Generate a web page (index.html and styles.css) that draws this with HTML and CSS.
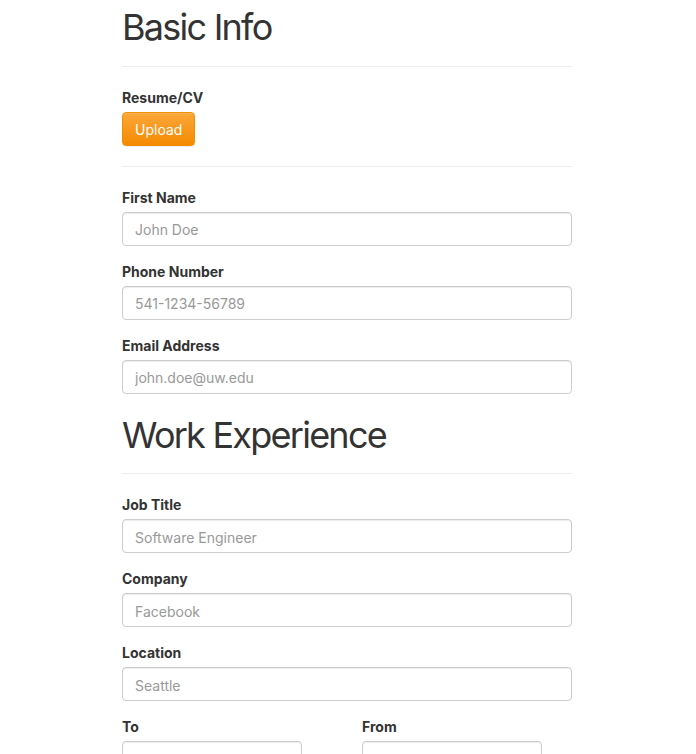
FILE: index.html
```html
<!DOCTYPE html>
<html>
<head>
<meta charset="utf-8">
<link rel="stylesheet" href="styles.css">
</head>
<body>
<div class="container">
  <h1 class="title first">Basic Info</h1>
  <hr>
  <div class="group">
    <label class="label">Resume/CV</label>
    <button class="btn-upload" type="button">Upload</button>
  </div>
  <hr class="after-btn">
  <div class="group">
    <label class="label">First Name</label>
    <input class="input" type="text" placeholder="John Doe">
  </div>
  <div class="group">
    <label class="label">Phone Number</label>
    <input class="input" type="text" placeholder="541-1234-56789">
  </div>
  <div class="group">
    <label class="label">Email Address</label>
    <input class="input" type="text" placeholder="john.doe@uw.edu">
  </div>
  <h1 class="title">Work Experience</h1>
  <hr>
  <div class="group">
    <label class="label">Job Title</label>
    <input class="input" type="text" placeholder="Software Engineer">
  </div>
  <div class="group">
    <label class="label">Company</label>
    <input class="input" type="text" placeholder="Facebook">
  </div>
  <div class="group">
    <label class="label">Location</label>
    <input class="input" type="text" placeholder="Seattle">
  </div>
  <div class="row">
    <div class="group">
      <label class="label">To</label>
      <input class="input short" type="text" placeholder="mm/dd/yyyy">
    </div>
    <div class="group">
      <label class="label">From</label>
      <input class="input short" type="text" placeholder="mm/dd/yyyy">
    </div>
  </div>
</div>
</body>
</html>
```

FILE: styles.css
```css
* { box-sizing: border-box; }
html, body {
  margin: 0;
  padding: 0;
  background: #fff;
}
body {
  font-family: Inter, "Helvetica Neue", Arial, sans-serif;
  font-size: 14px;
  line-height: 20px;
  color: #333;
}
.container {
  width: 450px;
  margin-left: 122px;
  display: flow-root;
}
.title {
  font-size: 36px;
  font-weight: 400;
  line-height: 36.6px;
  padding-top: 3px;
  margin: 20px 0 10px;
  letter-spacing: -1.75px;
  color: #333;
}
.title.first {
  margin-top: 6px;
}
hr {
  margin: 20px 0;
  border: 0;
  border-top: 1px solid #eee;
  height: 0;
}
.group {
  margin-bottom: 15px;
}
.label {
  display: block;
  font-weight: 700;
  padding-top: 1px;
  line-height: 19px;
  margin-bottom: 5px;
  max-width: 100%;
}
.btn-upload {
  display: block;
  height: 34px;
  padding: 7px 12px 5px;
  font-family: inherit;
  font-size: 14px;
  line-height: 20px;
  color: #fff;
  border: 1px solid #f09000;
  border-radius: 4px;
  background: linear-gradient(to bottom, #fba73a 0%, #f58a00 100%);
  box-shadow: inset 0 1px 0 rgba(255,255,255,0.15), 0 1px 1px rgba(0,0,0,0.075);
  width: 73px;
  text-align: center;
}
.group:has(.btn-upload) { margin-bottom: 0; }
.input {
  display: block;
  width: 100%;
  height: 34px;
  padding: 7px 12px 5px;
  font-family: inherit;
  font-size: 14px;
  line-height: 20px;
  color: #555;
  background: #fff;
  border: 1px solid #ccc;
  border-radius: 4px;
  box-shadow: inset 0 1px 1px rgba(0,0,0,0.075);
}
.input::placeholder {
  color: #999;
}
.input.short {
  width: 180px;
}
.row {
  display: grid;
  grid-template-columns: 240px 1fr;
}
```
